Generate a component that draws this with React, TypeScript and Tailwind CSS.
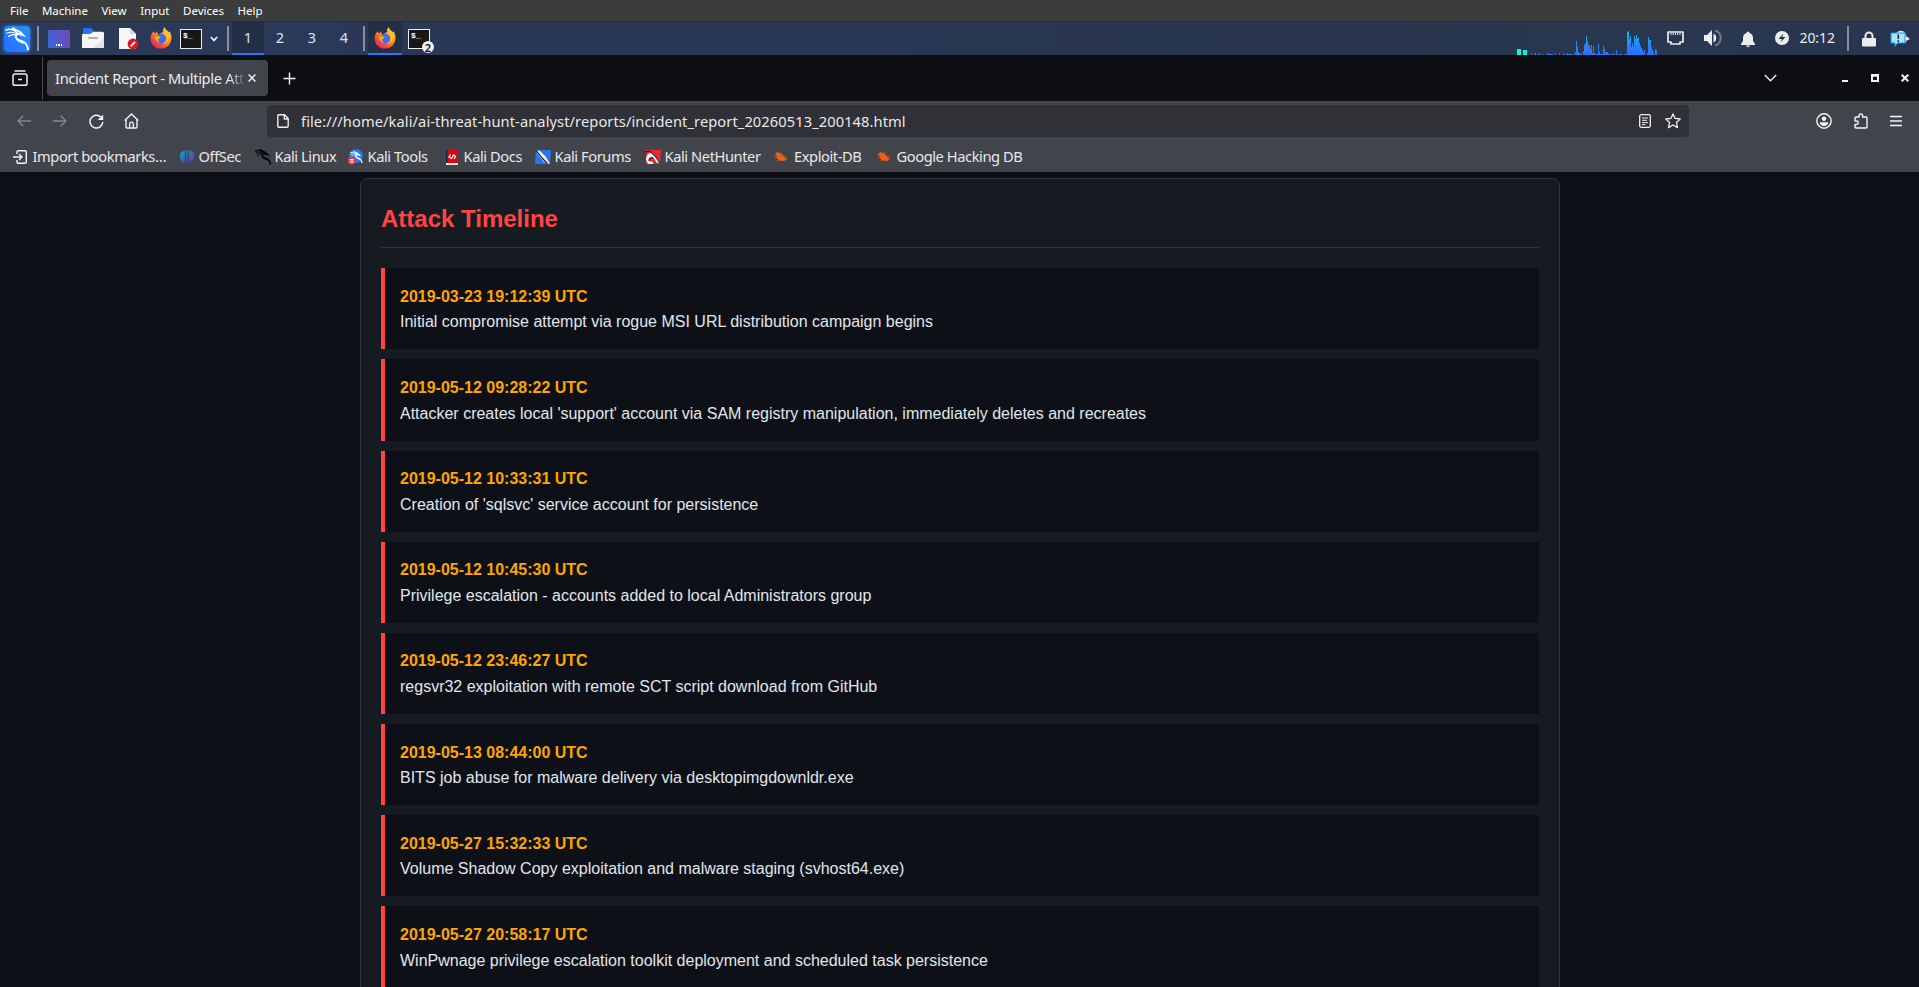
import type { ReactNode } from "react";

const menus = ["File", "Machine", "View", "Input", "Devices", "Help"];

const events = [
  { time: "2019-03-23 19:12:39 UTC", text: "Initial compromise attempt via rogue MSI URL distribution campaign begins" },
  { time: "2019-05-12 09:28:22 UTC", text: "Attacker creates local 'support' account via SAM registry manipulation, immediately deletes and recreates" },
  { time: "2019-05-12 10:33:31 UTC", text: "Creation of 'sqlsvc' service account for persistence" },
  { time: "2019-05-12 10:45:30 UTC", text: "Privilege escalation - accounts added to local Administrators group" },
  { time: "2019-05-12 23:46:27 UTC", text: "regsvr32 exploitation with remote SCT script download from GitHub" },
  { time: "2019-05-13 08:44:00 UTC", text: "BITS job abuse for malware delivery via desktopimgdownldr.exe" },
  { time: "2019-05-27 15:32:33 UTC", text: "Volume Shadow Copy exploitation and malware staging (svhost64.exe)" },
  { time: "2019-05-27 20:58:17 UTC", text: "WinPwnage privilege escalation toolkit deployment and scheduled task persistence" },
];

// CPU load history: the first sample's position, then one height per pixel
const load: [number, number[]][] = [
  [14, [2]],
  [17, [1, 2]],
  [21, [1, 2]],
  [24, [1]],
  [26, [1]],
  [30, [2, 1, 1, 1, 1, 1]],
  [38, [2]],
  [42, [2]],
  [46, [1, 1, 0, 1, 2, 1, 1, 1, 1, 0, 1]],
  [58, [3, 14, 8, 3, 2, 1, 2]],
  [66, [4, 10, 12, 19, 14, 10, 10, 6, 10, 2, 9, 2, 1, 1, 1, 11, 3, 1, 1, 1, 9, 6, 3, 3, 3]],
  [91, [1, 1, 1, 0, 1, 2]],
  [98, [1, 5, 1, 0, 1, 1, 1]],
  [107, [1, 1, 1]],
  [110, [23, 24, 16, 19, 8, 12, 9, 19, 16, 20, 17, 17, 12, 9, 7, 5, 3, 5]],
  [130, [2, 18, 15, 15, 8, 5, 3]],
  [138, [6, 5]],
];

function Icon({ w, h, className = "", children }: { w: number; h: number; className?: string; children: ReactNode }) {
  return (
    <svg width={w} height={h} viewBox={`0 0 ${w} ${h}`} fill="none" className={`shrink-0 ${className}`}>
      {children}
    </svg>
  );
}

function Dragon({ color, weight = 1 }: { color: string; weight?: number }) {
  return (
    <g stroke={color} fill="none" strokeLinecap="round">
      <path d="M1 3.2C5 1.2 9 2.2 12.5 6.2" strokeWidth={1.3 * weight} />
      <path d="M1.8 6.2C5 4.8 9 5.2 12.5 7" strokeWidth={1 * weight} />
      <path d="M3.5 9.5C5.5 7.8 8.5 7.2 12 8" strokeWidth={0.9 * weight} />
      <path
        d="M8 1.2C10 2.8 12.5 3.6 15.5 5.3L18.2 8.2L15.8 7.6C13.2 6.2 11 7.2 10.7 9.2C10.6 12.6 13.5 13.2 16.5 13.9C20 14.8 22.2 17.2 23 22.5"
        strokeWidth={1.7 * weight}
      />
      <path d="M11.5 11.5C12.5 14.5 16 14.8 18.5 16" strokeWidth={1.4 * weight} />
    </g>
  );
}

function Firefox({ id }: { id: string }) {
  return (
    <Icon w={22} h={22}>
      <defs>
        <linearGradient id={`${id}-fire`} x1="18" y1="2" x2="4" y2="20" gradientUnits="userSpaceOnUse">
          <stop offset="0" stopColor="#ffd43a" />
          <stop offset="0.45" stopColor="#ff8a20" />
          <stop offset="0.8" stopColor="#f7433c" />
          <stop offset="1" stopColor="#e8256b" />
        </linearGradient>
      </defs>
      <path
        d="M3.6 4.5C4 5.4 4.5 6 5.2 6.3C6 5.4 7.1 4.8 8.2 4.6C7.6 5.4 7.3 6 7.4 6.8L9.5 7.2L13.2 4.8C12.8 2.8 13.4 1.2 14.7 0.3C15.4 2.6 17.3 3.5 18.8 5.2C19.2 5 19.3 4.4 19.2 3.9C21 6.4 21.8 9 21.4 12C20.8 17.6 16.6 21.6 11 21.6C5.1 21.6 .6 17.2 .6 11.4C.6 8.4 1.7 6.2 3.6 4.5Z"
        fill={`url(#${id}-fire)`}
      />
      <circle cx="11" cy="11.7" r="5" fill="#3f6be8" />
      <path d="M5.4 9.3C7.3 8.8 9.7 9.4 11 10.5C9.8 10.8 9.6 12 8 12.2C8.2 13.8 9 15 10.4 15.6C7.2 16 5 12.8 5.4 9.3Z" fill="#ffa526" />
      <path d="M13.2 4.8C16 7 17.4 9.4 16.9 12.2C16.3 14.5 14.3 16.4 11.8 16.6C15 17.6 18.4 15.3 18.9 11.6C19.2 8.5 16.8 5.9 13.2 4.8Z" fill="#ffc233" />
    </Icon>
  );
}

function Terminal() {
  return (
    <div className="h-5 w-[22px] shrink-0 border border-[#eeeeee] bg-[#171718]">
      <div className="pl-[2px] pt-[1px] font-['Liberation_Mono',monospace] text-[8px] font-bold leading-[9px] text-white">$_</div>
    </div>
  );
}

function Separator({ className }: { className: string }) {
  return <div className={`h-[25px] w-[2px] shrink-0 bg-[#8a8e9b] ${className}`} />;
}

function Panel() {
  return (
    <div className="flex h-[34px] shrink-0 items-stretch border-t border-[#252e40] bg-[linear-gradient(90deg,#2b3a59_0%,#2a3754_45%,#28344d_70%,#293850_88%,#28344f_100%)] font-['Noto_Sans',sans-serif]">
      <div className="flex w-[232px] items-center">
        <div className="ml-[4px] flex h-[26px] w-[26px] shrink-0 items-center justify-center rounded-sm bg-[linear-gradient(45deg,#246eff,#2592ff)] shadow-[0_0_4px_#2777ff]">
          <Icon w={24} h={24}>
            <Dragon color="#ffffff" weight={1.15} />
          </Icon>
        </div>
        <Separator className="ml-[7px]" />
        <div className="ml-[9px] flex h-[18px] w-[22px] shrink-0 items-end justify-center gap-px rounded-[1px] bg-[linear-gradient(65deg,#326bd7,#5955c5_55%,#7a46ae)] pb-[2px]">
          <i className="h-[2px] w-[1.5px] bg-white" />
          <i className="h-[2px] w-[1.5px] bg-white" />
          <i className="h-[2px] w-[1.5px] bg-white" />
        </div>
        <Icon w={22} h={22} className="mb-px ml-[12px]">
          <path d="M1 8V3Q1 1 3 1H9L12 4H20Q21 4 21 5V9Z" fill="#2773ef" />
          <path d="M0 8Q0 7 1 7H8L11 5H21Q22 5 22 6V21H0Z" fill="#f5f5f7" />
          <path d="M22 11V21H11Z" fill="#e3e3e5" />
          <rect x="6" y="10" width="10" height="2" rx="1" fill="#b1b1b2" />
        </Icon>
        <Icon w={21} h={23} className="ml-[14px]">
          <path d="M1 1H12L18 7V22H1Z" fill="#f7f7f8" />
          <path d="M12 1L18 7H12Z" fill="#d5d5d7" />
          <circle cx="15" cy="17" r="5.4" fill="#d71b25" />
          <path d="M12.7 19.3L17 15" stroke="#fff" strokeWidth="1.8" />
        </Icon>
        <div className="mb-px ml-[11px]">
          <Firefox id="launcher" />
        </div>
        <div className="ml-[8px]">
          <Terminal />
        </div>
        <Icon w={8} h={6} className="ml-[8px]">
          <path d="M.8 1L4 4.4L7.2 1" stroke="#eeeef2" strokeWidth="1.7" />
        </Icon>
        <Separator className="ml-[9px]" />
      </div>
      {["1", "2", "3", "4"].map((n) => (
        <div
          key={n}
          className={`flex w-8 shrink-0 justify-center border-b-2 pb-px text-[14.5px] leading-[30px] text-[#dfe3ea] ${
            n === "1" ? "border-[#2777ff] bg-[#232e47]" : "border-transparent"
          }`}
        >
          {n}
        </div>
      ))}
      <div className="ml-[3px] flex items-center">
        <Separator className="" />
      </div>
      <div className="ml-[3px] flex w-[34px] items-center justify-center border-b-2 border-[#2777ff] bg-[#232e47]">
        <Firefox id="task" />
      </div>
      <div className="relative ml-[6px] flex w-[30px] items-center">
        <Terminal />
        <span className="absolute left-[14px] top-[19px] flex h-3 w-3 items-center justify-center rounded-full bg-[#eeeeee] text-[11px] font-semibold leading-none text-[#111]">
          2
        </span>
      </div>
      <div className="ml-auto flex w-[402px] items-center">
        <svg width={140} height={33} viewBox="0 0 140 33" className="shrink-0" shapeRendering="crispEdges">
          <defs>
            <linearGradient id="load" x1="0" y1="7" x2="0" y2="33" gradientUnits="userSpaceOnUse">
              <stop offset="0" stopColor="#08c6e8" />
              <stop offset="0.7" stopColor="#2680fa" />
              <stop offset="1" stopColor="#2b70ff" />
            </linearGradient>
          </defs>
          <rect x="0" y="27" width="4" height="6" fill="#00f7e2" />
          <rect x="6" y="28" width="4" height="5" fill="#00f7e2" />
          <path
            d={load.map(([x, run]) => run.map((v, i) => `M${x + i} 33v-${v}h1v${v}z`).join("")).join("")}
            fill="url(#load)"
          />
        </svg>
        <Icon w={17} h={14} className="mb-px ml-[10px]">
          <path d="M1 1H16V11H13V13H4V11H1Z" stroke="#ededee" strokeWidth="1.7" strokeLinejoin="round" />
          <path d="M4 2V4M6.2 2V4M8.5 2V4M10.8 2V4M13 2V4" stroke="#ededee" />
        </Icon>
        <Icon w={19} h={18} className="mb-px ml-[19px]">
          <path d="M1 6H4L9 1V17L4 12H1Z" fill="#ededee" />
          <path d="M10.5 4.5A5 5 0 0 1 10.5 13.5Z" fill="#ededee" />
          <path d="M12 1.5A7.8 7.8 0 0 1 12 16.5" stroke="#707987" strokeWidth="2" />
        </Icon>
        <Icon w={14} h={16} className="ml-[19px]">
          <path d="M7 .5A1.5 1.5 0 0 1 8.5 2Q12 3 12 7V10L14 13V14H0V13L2 10V7Q2 3 5.5 2A1.5 1.5 0 0 1 7 .5ZM5 14.5H9Q8.5 16 7 16Q5.5 16 5 14.5Z" fill="#ededee" />
        </Icon>
        <Icon w={14} h={14} className="mb-px ml-[20px]">
          <circle cx="7" cy="7" r="7" fill="#ededee" />
          <path d="M8.5 2.5L3.5 8H7L5.5 11.5L10.5 6H7.2Z" fill="#263451" />
        </Icon>
        <span className="mb-[2px] ml-[10.5px] w-[37px] shrink-0 text-[14px] leading-[30px] tracking-[-0.1px] text-[#e8ebef]">20:12</span>
        <Separator className="ml-[10.5px]" />
        <Icon w={14} h={16} className="ml-[13px]">
          <path d="M3.5 8V5A3.5 3.5 0 0 1 10.5 5V8" stroke="#ededee" strokeWidth="2" />
          <rect y="7" width="14" height="8.5" rx="1" fill="#ededee" />
        </Icon>
        <Icon w={20} h={18} className="ml-[14px]">
          <path d="M6 3Q12-2 16 4V6L20 9L16 11V13H7Z" fill="#eeeeef" />
          <path d="M1 3H15V13H7.5L5 16.5V13H1Z" fill="#a2e9ff" stroke="#168ce9" />
          <path d="M8.3 4.5V9M8.3 10.2V12" stroke="#10202c" strokeWidth="1.5" />
        </Icon>
      </div>
    </div>
  );
}

function TabStrip() {
  return (
    <div className="flex h-[46px] items-center bg-[#0d0e12]">
      <div className="flex h-[43px] w-[43px] shrink-0 items-center border-r border-[#4a4b50] pl-3">
        <Icon w={16} h={17}>
          <path d="M3 1H13" stroke="#eeeeee" strokeWidth="1.4" strokeLinecap="round" />
          <path d="M1 6Q1 4 3 4H13Q15 4 15 6V13.5Q15 15.3 13 15.3H3Q1 15.3 1 13.5Z" stroke="#eeeeee" strokeWidth="1.5" />
          <path d="M6 9.5H10" stroke="#eeeeee" strokeWidth="1.5" />
        </Icon>
      </div>
      <div className="ml-1 flex h-9 w-[221px] shrink-0 items-center rounded bg-[#42444c] pl-2">
        <div className="mb-px w-[191px] whitespace-nowrap text-[14.67px] leading-5 tracking-[-0.34px] text-[#ececee]">
          Incident Report - Multiple{" "}
          <span className="bg-[linear-gradient(90deg,#ececee_25%,#55575e_105%)] bg-clip-text text-transparent">Att</span>
        </div>
        <Icon w={8} h={8} className="ml-[2px]">
          <path d="M.6 .6L7.4 7.4M7.4 .6L.6 7.4" stroke="#f4f4f6" strokeWidth="1.4" />
        </Icon>
      </div>
      <Icon w={13} h={13} className="ml-[15px]">
        <path d="M6.5 .5V12.5M.5 6.5H12.5" stroke="#f4f4f6" strokeWidth="1.4" />
      </Icon>
      <Icon w={13} h={8} className="ml-auto">
        <path d="M.8 1L6.5 6.7L12.2 1" stroke="#eeeeee" strokeWidth="1.4" />
      </Icon>
      <Icon w={6} h={8} className="ml-[65px]">
        <path d="M0 7H6" stroke="#f4f4f4" strokeWidth="2" />
      </Icon>
      <Icon w={8} h={8} className="ml-[23px]">
        <path d="M1 1.5H7V7H1Z" stroke="#f4f4f4" strokeWidth="2" />
        <path d="M0 1H8" stroke="#f4f4f4" strokeWidth="3" />
      </Icon>
      <Icon w={8} h={8} className="ml-[22px] mr-[10px]">
        <path d="M.7 .7L7.3 7.3M7.3 .7L.7 7.3" stroke="#f4f4f4" strokeWidth="2" />
      </Icon>
    </div>
  );
}

function NavBar() {
  return (
    <div className="flex h-10 items-center">
      <Icon w={14} h={12} className="ml-[17px]">
        <path d="M14 6H1M6.3 .8L1 6L6.3 11.2" stroke="#85868b" strokeWidth="1.4" />
      </Icon>
      <Icon w={14} h={12} className="ml-[22px]">
        <path d="M0 6H13M7.7 .8L13 6L7.7 11.2" stroke="#85868b" strokeWidth="1.4" />
      </Icon>
      <Icon w={15} h={15} className="ml-[22px]">
        <path d="M13.8 8A6.4 6.4 0 1 1 11.8 3" stroke="#f4f4f6" strokeWidth="1.5" />
        <path d="M14.2 .5V6H8.7Z" fill="#f4f4f6" />
      </Icon>
      <Icon w={15} h={16} className="ml-[20px]">
        <path d="M.7 7.5L7.5 .9L14.3 7.5M2 6.5V14Q2 15 3 15H12Q13 15 13 14V6.5" stroke="#f4f4f6" strokeWidth="1.4" strokeLinejoin="round" />
        <path d="M5.7 15V11Q5.7 9.2 7.5 9.2Q9.3 9.2 9.3 11V15" stroke="#f4f4f6" strokeWidth="1.3" />
      </Icon>
      <div className="ml-[128px] flex h-8 w-[1422px] shrink-0 items-center rounded bg-[#303136]">
        <Icon w={12} h={14} className="ml-[10px]">
          <path d="M.8 2Q.8 .8 2 .8H7.5L11.2 4.5V12Q11.2 13.2 10 13.2H2Q.8 13.2 .8 12Z" stroke="#eeeeee" strokeWidth="1.4" />
          <path d="M7.3 1V5H11" stroke="#eeeeee" strokeWidth="1.3" />
        </Icon>
        <span className="ml-[12px] text-[14.67px] leading-5 tracking-[0.085px] text-[#e8e8ea]">
          file:///home/kali/ai-threat-hunt-analyst/reports/incident_report_20260513_200148.html
        </span>
        <Icon w={12} h={14} className="ml-auto">
          <rect x=".7" y=".7" width="10.6" height="12.6" rx="1.5" stroke="#eeeeee" strokeWidth="1.3" />
          <path d="M3 4H9M3 6.3H8M3 8.6H9M3 10.6H6.5" stroke="#eeeeee" />
        </Icon>
        <Icon w={16} h={16} className="ml-[14px] mr-2">
          <path d="M8 .9L10.1 5.4L15.2 6L11.4 9.4L12.5 14.6L8 12L3.5 14.6L4.6 9.4L.8 6L5.9 5.4Z" stroke="#eeeeee" strokeWidth="1.3" strokeLinejoin="round" />
        </Icon>
      </div>
      <Icon w={16} h={16} className="ml-auto">
        <circle cx="8" cy="8" r="7.2" stroke="#f4f4f6" strokeWidth="1.4" />
        <circle cx="8" cy="5.7" r="2.3" fill="#f4f4f6" />
        <path d="M3.8 9.2H12.2Q12 13 8 13Q4 13 3.8 9.2Z" fill="#f4f4f6" />
      </Icon>
      <Icon w={14} h={16} className="ml-[22px]">
        <path
          d="M1 8V5Q1 4 2 4H5V2.7A1.8 1.8 0 0 1 8.6 2.7V4H12Q13 4 13 5V14Q13 15 12 15H2Q1 15 1 14V11.5H2.5A1.7 1.7 0 0 0 2.5 8Z"
          stroke="#f4f4f6"
          strokeWidth="1.4"
          strokeLinejoin="round"
        />
      </Icon>
      <Icon w={12} h={12} className="ml-[22px] mr-[17px]">
        <path d="M0 1.5H12M0 6H12M0 10.5H12" stroke="#f4f4f6" strokeWidth="1.3" />
      </Icon>
    </div>
  );
}

function Bug() {
  return (
    <>
      <path d="M1.5 4Q5 2.5 8 5.5L12 10Q11.8 12.6 8.5 12Q4 11.3 3 9Z" fill="#f06112" />
      <path d="M0 6L4 6.5M1 9L5 8M3 12L7 10M3 3L5 5M7 3L7 6M10 5L8 7M13 7.5L9 8M13.5 10L10 10" stroke="#dc641f" strokeWidth=".7" />
    </>
  );
}

const bookmarks: { label: string; width: string; icon: ReactNode }[] = [
  {
    label: "Import bookmarks…",
    width: "w-[166px]",
    icon: (
      <path d="M0 8H9M6 5L9 8L6 11M4 5V3Q4 1.8 5 1.8H12Q13.3 1.8 13.3 3V13Q13.3 14.2 12 14.2H5Q4 14.2 4 13V11" stroke="#f4f4f6" strokeWidth="1.4" />
    ),
  },
  {
    label: "OffSec",
    width: "w-[76px]",
    icon: (
      <>
        <defs>
          <linearGradient id="offsec" x1="2" y1="1" x2="12" y2="15" gradientUnits="userSpaceOnUse">
            <stop stopColor="#06a8bd" />
            <stop offset="1" stopColor="#5b32cf" />
          </linearGradient>
        </defs>
        <path d="M6 1Q0 3 1 8Q1 12 5 14L6 11ZM7.3 1H8.7V15L7.3 13ZM10 1Q16 3 15 8Q15 12 11 14L10 11Z" fill="url(#offsec)" />
      </>
    ),
  },
  {
    label: "Kali Linux",
    width: "w-[93px]",
    icon: (
      <g transform="scale(.67)">
        <Dragon color="#08090b" weight={1.6} />
      </g>
    ),
  },
  {
    label: "Kali Tools",
    width: "w-[96px]",
    icon: (
      <>
        <circle cx="8" cy="7" r="7" fill="#2777ed" />
        <g transform="translate(2 2) scale(.52)">
          <Dragon color="#ffffff" weight={1.3} />
        </g>
        <circle cx="3.8" cy="11.8" r="3.8" fill="#f13b3e" />
        <path d="M1.8 10.5H5.8M3 10.5V14M4.8 10.5V14" stroke="#fff" strokeWidth=".9" />
      </>
    ),
  },
  {
    label: "Kali Docs",
    width: "w-[91px]",
    icon: (
      <>
        <path d="M2 1H14V14H2Z" fill="#d9090d" />
        <path d="M2 1H3.5V14H2Z" fill="#142850" />
        <path d="M2 14H14V16H2Z" fill="#ece9e7" />
        <path d="M6.5 5.5L5 8L7.5 9.5L9.5 6L11.5 7.5L10 10" stroke="#fff" strokeWidth="1.2" />
      </>
    ),
  },
  {
    label: "Kali Forums",
    width: "w-[110px]",
    icon: (
      <>
        <path d="M1 1H16L15 15H0Z" fill="#2676ef" />
        <path d="M1 1L5 2L11 8L15 15L9 13L4 7Z" fill="#f2f2f2" />
        <path d="M1 1L7 9L12 14" stroke="#171b23" strokeWidth="1.2" />
      </>
    ),
  },
  {
    label: "Kali NetHunter",
    width: "w-[129.5px]",
    icon: (
      <>
        <path d="M1 1H16L15 15H1Z" fill="#e82834" />
        <path d="M1 11C1 5 5 3 8 4L15 13L12 14L8 8C5 8 4 9 4 12L8 13V15H3Z" fill="#f5f4f5" />
        <path d="M0 3L5 2L10 7L15 14M4 12Q4 8 8 9" stroke="#17191e" strokeWidth="1.1" />
      </>
    ),
  },
  { label: "Exploit-DB", width: "w-[102.5px]", icon: <Bug /> },
  { label: "Google Hacking DB", width: "w-[160px]", icon: <Bug /> },
];

export default function App() {
  return (
    <div className="flex h-[987px] w-[1919px] flex-col overflow-hidden bg-[#0d1117]">
      <div className="flex h-[21px] shrink-0 items-center gap-[13.5px] bg-[#3b3c3c] pl-[10px] font-['Noto_Sans',sans-serif] text-[11.5px] leading-[21px] text-white">
        {menus.map((m) => (
          <span key={m}>{m}</span>
        ))}
      </div>
      <Panel />
      <div className="shrink-0 font-['Noto_Sans',sans-serif]">
        <TabStrip />
        <div className="h-[71px] bg-[#42444c]">
          <NavBar />
          <div className="flex h-[31px] items-center pl-[12.5px] text-[14.67px] leading-5 tracking-[-0.42px] text-[#e8e8ea]">
            {bookmarks.map((b) => (
              <div key={b.label} className={`flex shrink-0 items-center gap-1 whitespace-nowrap ${b.width}`}>
                <Icon w={16} h={16}>{b.icon}</Icon>
                <span className="pb-[2px]">{b.label}</span>
              </div>
            ))}
          </div>
        </div>
      </div>
      <main className="min-h-0 flex-1 overflow-hidden border-t border-[#0b0d11] pl-px pt-[4.8px] font-['Liberation_Sans',Arial,sans-serif] text-base leading-[1.6] text-[#e1e6ec]">
        <section className="mx-auto h-[900px] w-[1200px] rounded-lg border border-[#30363d] bg-[#161b22] p-5">
          <h2 className="mb-5 border-b border-[#30363d] pb-[8.8px] pt-[1.2px] text-2xl font-bold leading-[1.6] text-[#ff4444]">Attack Timeline</h2>
          <div className="flex flex-col gap-[10px]">
            {events.map((e) => (
              <article key={e.time} className="border-l-4 border-[#ff4444] bg-[#0d1117] px-[15px] pb-[14.4px] pt-[15.6px]">
                <div className="font-bold text-[#ffa500]">{e.time}</div>
                <div>{e.text}</div>
              </article>
            ))}
          </div>
        </section>
      </main>
    </div>
  );
}
